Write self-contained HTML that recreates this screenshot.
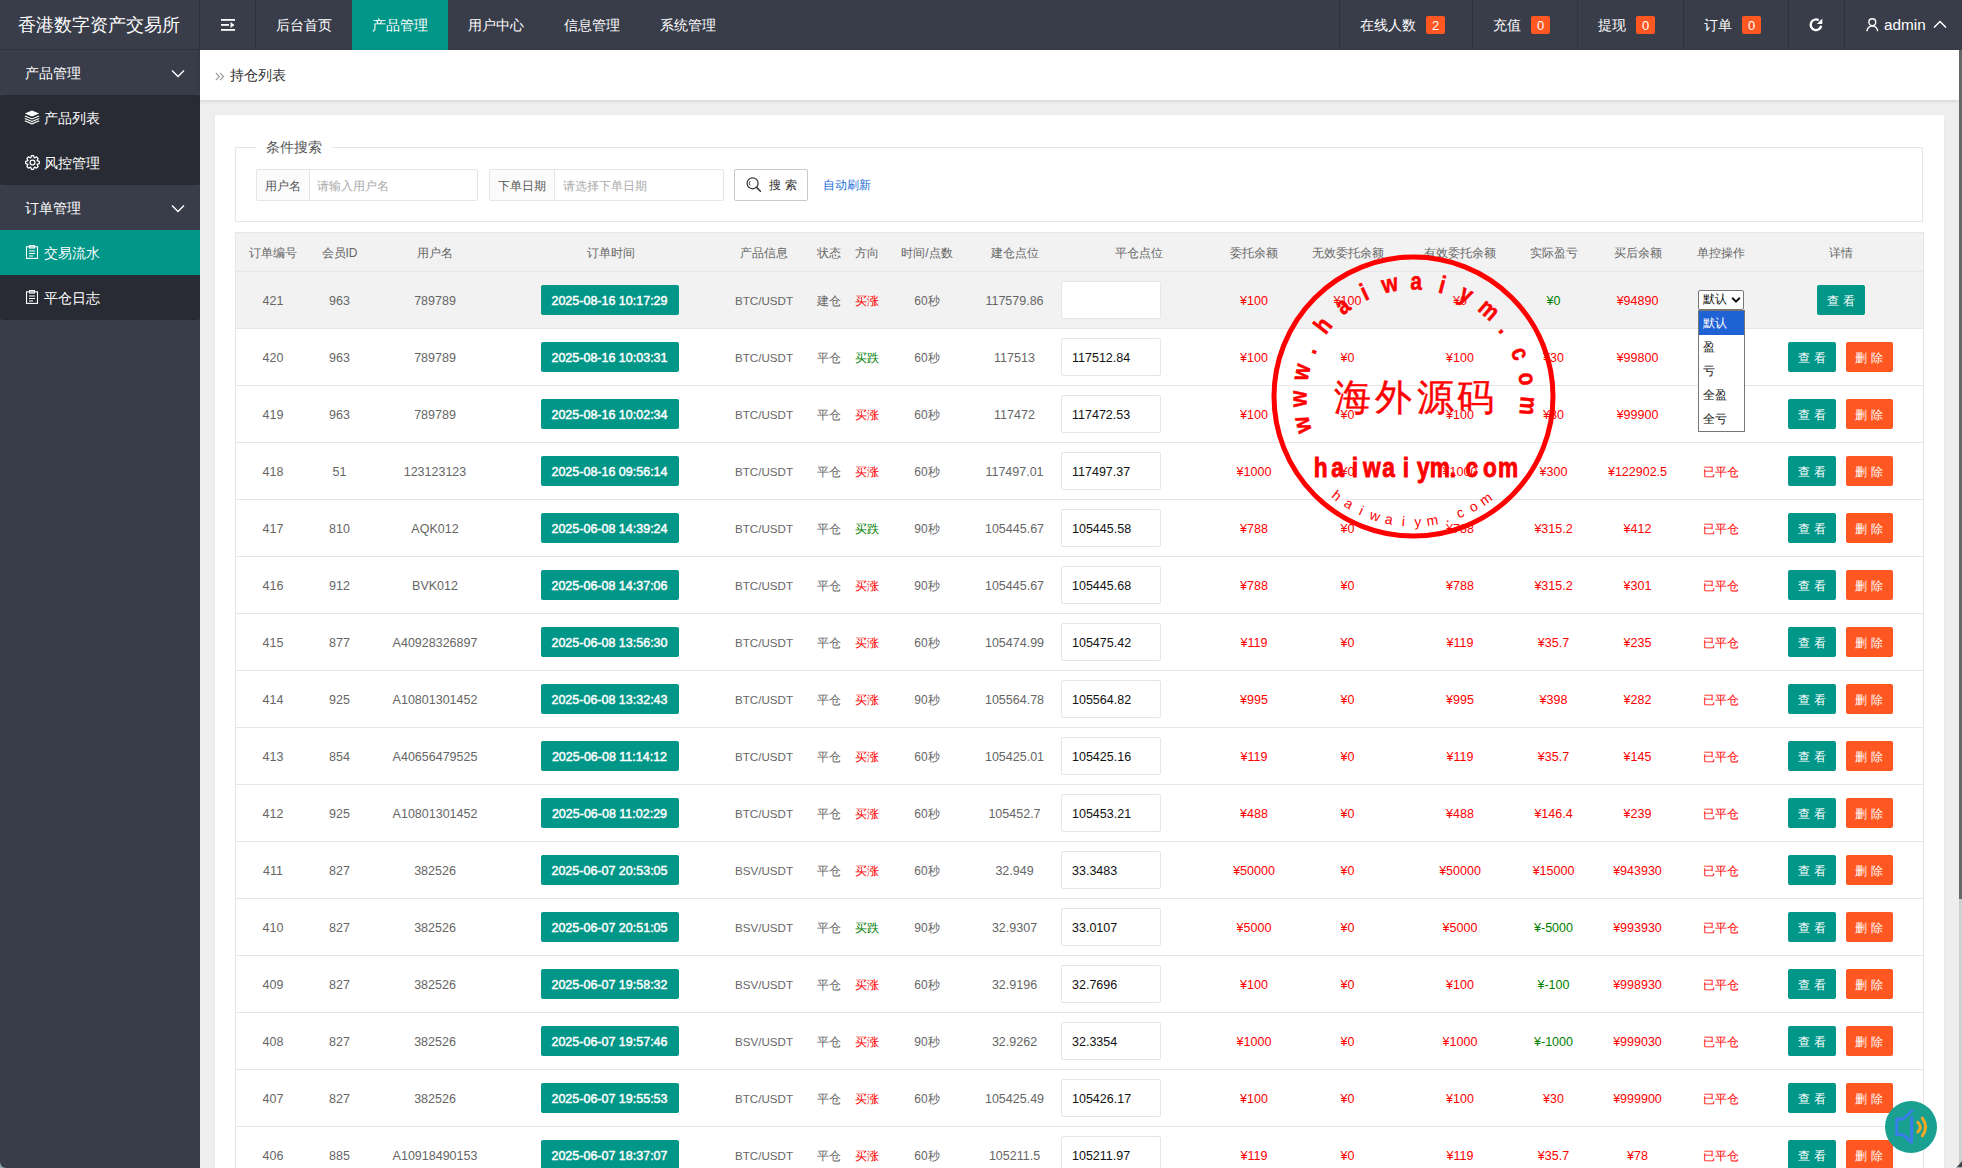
<!DOCTYPE html>
<html><head><meta charset="utf-8">
<style>
*{box-sizing:border-box;margin:0;padding:0}
html,body{width:1962px;height:1168px;overflow:hidden;background:#eee;font-family:"Liberation Sans",sans-serif;}
.hdr{position:absolute;left:0;top:0;width:1962px;height:50px;background:#393D49;color:#fff}
.logo{position:absolute;left:0;top:0;width:200px;height:50px;border-right:1px solid #2f323c;border-bottom:1px solid #2f323c;font-size:18px;line-height:50px;padding-left:18px;letter-spacing:0px;white-space:nowrap}
.hamb{position:absolute;left:200px;top:0;width:56px;height:50px;border-right:1px solid #30333d}
.nav{position:absolute;top:0;height:50px;line-height:50px;font-size:14px;text-align:center;width:96px}
.nav.act{background:#009688}
.rn{position:absolute;top:0;height:50px;line-height:50px;font-size:14px;border-left:1px solid #30333d;padding-left:20px;white-space:nowrap}
.badge{display:inline-block;position:absolute;top:16px;width:19px;height:18px;line-height:19px;background:#FF5722;border-radius:2px;font-size:13px;text-align:center}
.side{position:absolute;left:0;top:50px;width:200px;height:1118px;background:#393D49;color:#fff;font-size:14px;border-bottom-left-radius:6px}
.si{position:absolute;left:0;width:200px;height:45px;line-height:45px;padding-top:1px;padding-left:25px;white-space:nowrap}
.sub{position:absolute;left:0;width:200px;background:#282B33;border-radius:3px}
.si.act{background:#009688}
.si svg{position:absolute;left:25px;top:15px}
.si .tx{position:absolute;left:44px}
.chev{position:absolute;left:171px;top:19px}
.main{position:absolute;left:200px;top:50px;width:1759px;height:1118px;background:#eee}
.bc{position:absolute;left:0;top:0;width:1759px;height:50px;background:#fff;box-shadow:0 1px 4px rgba(0,0,0,.12);font-size:14px;color:#333;line-height:50px}
.card{position:absolute;left:15px;top:65px;width:1729px;height:1100px;background:#fff;box-shadow:0 1px 2px 0 rgba(0,0,0,.06)}
.fs{position:absolute;left:20px;top:32px;width:1688px;height:75px;border:1px solid #e6e6e6}
.legend{position:absolute;left:20px;top:-10px;background:#fff;padding:0 10px;font-size:14px;line-height:18px;color:#555}
.ig{position:absolute;top:22px;height:32px;border:1px solid #e6e6e6;border-radius:2px;background:#fff;font-size:12px;line-height:32px;white-space:nowrap}
.ig .lb{position:absolute;left:0;top:0;height:30px;background:#FBFBFB;border-right:1px solid #e6e6e6;color:#555;text-align:center}
.ig .ph{position:absolute;top:0;color:#aaa}
.sbtn{position:absolute;left:519px;top:22px;width:74px;height:32px;border:1px solid #C9C9C9;border-radius:2px;background:#fff;font-size:12px;line-height:30px;color:#333}
.auto{position:absolute;left:608px;top:30px;font-size:12px;line-height:16px;color:#1E6FD9}
.tbl{position:absolute;left:20px;top:117px;width:1688px;height:1000px}
.tbo{position:absolute;left:0;top:0;width:1689px;height:1000px;border-left:1px solid #e6e6e6;border-right:1px solid #e6e6e6;border-top:1px solid #e6e6e6;z-index:2}
.tr{position:absolute;left:0;width:1689px;border-bottom:1px solid #e6e6e6;background:#fff}
.th,.hl{background:#f2f2f2}
.c{position:absolute;top:0;height:100%;display:flex;align-items:center;justify-content:center;font-size:12px;color:#666;white-space:nowrap;padding-top:2px}
.c.n{font-size:12.5px;padding-top:1px}
.c.p{font-size:11.6px}
.c.d2{padding-right:1px}
.c.b{padding-top:0}
.th .c{padding-top:4px}
.red{color:#FF0000}.green{color:#008000}
.tbtn{position:relative;left:-1px;display:inline-block;width:138px;height:30px;line-height:32px;background:#009688;color:#fff;font-weight:normal;-webkit-text-stroke:0.45px #fff;border-radius:2px;text-align:center}
.inp{position:absolute;left:826px;width:100px;height:38px;border:1px solid #e6e6e6;border-radius:2px;background:#fff;font-size:12.5px;line-height:36px;padding-left:10px;padding-top:1px;color:#111}
.bt{display:inline-block;width:48px;height:30px;line-height:32px;color:#fff;font-size:12px;text-align:center;border-radius:2px;letter-spacing:4px;text-indent:3px}
.bt.g{background:#009688}.bt.o{background:#FF5722;margin-left:10px;width:47px}
.sel{display:inline-block;position:relative;width:46px;height:20px;border:1px solid #767676;border-radius:2px;background:#fff;color:#111;font-size:12px;line-height:17px;padding-left:4px;text-align:left}
.sel svg{position:absolute;left:32px;top:5px}
.dd{position:absolute;left:1698px;top:310px;width:47px;height:122px;border:1px solid #767676;background:#fff;font-size:12px;color:#111}
.dd div{height:24px;line-height:24px;padding-left:4px}
.dd .on{background:#1F62D4;color:#fff}
.sb{position:absolute;left:1959px;top:50px;width:3px;height:1118px;background:#cfcfcf}
.sbt{position:absolute;left:1959px;top:50px;width:3px;height:849px;background:#666}
.fab{position:absolute;left:1885px;top:1101px;width:52px;height:52px;z-index:6}
</style></head><body>
<div class="hdr">
  <div class="logo">香港数字资产交易所</div>
  <div class="hamb"><svg width="14" height="12" style="position:absolute;left:21px;top:19px" viewBox="0 0 14 12"><rect x="0" y="0" width="14" height="1.8" fill="#fff"/><rect x="0" y="5" width="8" height="1.8" fill="#fff"/><rect x="0" y="10" width="14" height="1.8" fill="#fff"/><path d="M9.5 3 L13.5 6 L9.5 9 Z" fill="#fff"/></svg></div>
  <div class="nav" style="left:256px">后台首页</div>
  <div class="nav act" style="left:352px">产品管理</div>
  <div class="nav" style="left:448px">用户中心</div>
  <div class="nav" style="left:544px">信息管理</div>
  <div class="nav" style="left:640px">系统管理</div>
  <div class="rn" style="left:1339px;width:133px">在线人数<span class="badge" style="left:86px">2</span></div>
  <div class="rn" style="left:1472px;width:105px">充值<span class="badge" style="left:58px">0</span></div>
  <div class="rn" style="left:1577px;width:106px">提现<span class="badge" style="left:58px">0</span></div>
  <div class="rn" style="left:1683px;width:105px">订单<span class="badge" style="left:58px">0</span></div>
  <div class="rn" style="left:1788px;width:57px;padding:0">
    <svg width="16" height="16" viewBox="0 0 16 16" style="position:absolute;left:19px;top:17px"><path d="M10.65 3.21 A5.3 5.3 0 1 0 13.2 8.7" stroke="#fff" stroke-width="2.3" fill="none"/><path d="M8.8 7.1 L14.3 1.6 L14.3 7.1 Z" fill="#fff"/></svg>
  </div>
  <div class="rn" style="left:1844px;width:118px;padding:0">
    <svg width="14" height="16" viewBox="0 0 14 16" style="position:absolute;left:21px;top:17px"><circle cx="6.3" cy="5.2" r="3.4" stroke="#fff" stroke-width="1.4" fill="none"/><path d="M1 14.3 A5.3 5.3 0 0 1 11.6 14.3" stroke="#fff" stroke-width="1.4" fill="none"/></svg>
    <span style="position:absolute;left:39px;font-size:15.3px">admin</span>
    <svg width="14" height="9" viewBox="0 0 14 9" style="position:absolute;left:88px;top:20px"><path d="M1 7.5 L7 1.5 L13 7.5" stroke="#fff" stroke-width="1.5" fill="none"/></svg>
  </div>
</div>
<div class="corner" style="position:absolute;left:0;top:1156px;width:12px;height:12px;background:#93a6b8"></div>
<div class="side">
  <div class="si" style="top:0">产品管理<svg class="chev" width="14" height="9" viewBox="0 0 14 9" style="position:absolute;left:171px;top:19px"><path d="M1 1.5 L7 7.5 L13 1.5" stroke="#fff" stroke-width="1.4" fill="none"/></svg></div>
  <div class="sub" style="top:45px;height:90px"></div>
  <div class="si" style="top:45px"><svg style="left:24px;top:15px" width="16" height="15" viewBox="0 0 16 15"><path d="M8 0.6 L15.2 3.6 L8 6.6 L0.8 3.6 Z" fill="#fff"/><path d="M0.8 6 L8 9 L15.2 6 M0.8 8.4 L8 11.4 L15.2 8.4 M0.8 10.8 L8 13.8 L15.2 10.8" stroke="#fff" stroke-width="1.1" fill="none"/></svg><span class="tx">产品列表</span></div>
  <div class="si" style="top:90px"><svg style="left:25px;top:15px" width="15" height="15" viewBox="0 0 15 15"><g fill="none" stroke="#fff" stroke-width="1.25" stroke-linejoin="round"><path d="M6.42 0.68 L8.58 0.68 L9.38 2.97 L11.56 1.92 L13.08 3.44 L12.03 5.62 L14.32 6.42 L14.32 8.58 L12.03 9.38 L13.08 11.56 L11.56 13.08 L9.38 12.03 L8.58 14.32 L6.42 14.32 L5.62 12.03 L3.44 13.08 L1.92 11.56 L2.97 9.38 L0.68 8.58 L0.68 6.42 L2.97 5.62 L1.92 3.44 L3.44 1.92 L5.62 2.97 Z"/><circle cx="7.5" cy="7.5" r="2.4"/></g></svg><span class="tx">风控管理</span></div>
  <div class="si" style="top:135px">订单管理<svg width="14" height="9" viewBox="0 0 14 9" style="position:absolute;left:171px;top:19px"><path d="M1 1.5 L7 7.5 L13 1.5" stroke="#fff" stroke-width="1.4" fill="none"/></svg></div>
  <div class="sub" style="top:180px;height:90px"></div>
  <div class="si act" style="top:180px"><svg width="14" height="14" viewBox="0 0 14 14"><g fill="none" stroke="#fff" stroke-width="1.1"><rect x="1.5" y="1.8" width="11" height="11.6"/><rect x="4.5" y="0.6" width="5" height="2.4"/><path d="M4 6 H10 M4 8.5 H10 M4 11 H8"/></g></svg><span class="tx">交易流水</span></div>
  <div class="si" style="top:225px"><svg width="14" height="14" viewBox="0 0 14 14"><g fill="none" stroke="#fff" stroke-width="1.1"><rect x="1.5" y="1.8" width="11" height="11.6"/><rect x="4.5" y="0.6" width="5" height="2.4"/><path d="M4 6 H10 M4 8.5 H10 M4 11 H8"/></g></svg><span class="tx">平仓日志</span></div>
</div>
<div class="main">
  <div class="bc"><svg width="10" height="9" viewBox="0 0 10 9" style="position:absolute;left:15px;top:22px"><path d="M0.8 0.8 L4.3 4.5 L0.8 8.2 M5 0.8 L8.5 4.5 L5 8.2" stroke="#999" stroke-width="1.1" fill="none"/></svg><span style="position:absolute;left:30px">持仓列表</span></div>
  <div class="card">
    <div class="fs">
      <div class="legend">条件搜索</div>
      <div class="ig" style="left:20px;top:21px;width:222px"><span class="lb" style="width:53px">用户名</span><span class="ph" style="left:60px">请输入用户名</span></div>
      <div class="ig" style="left:253px;top:21px;width:235px"><span class="lb" style="width:65px">下单日期</span><span class="ph" style="left:73px">请选择下单日期</span></div>
    </div>
    <div class="sbtn" style="left:519px;top:54px"><svg width="18" height="18" viewBox="0 0 18 18" style="position:absolute;left:10px;top:6px"><circle cx="7.6" cy="7.3" r="5.5" stroke="#333" stroke-width="1.2" fill="none"/><path d="M11.6 11.4 L15.4 15.2" stroke="#333" stroke-width="1.5" stroke-linecap="round"/><path d="M5.2 5.2 A3 3 0 0 0 5.2 9.4" stroke="#333" stroke-width="0.9" fill="none"/></svg><span style="position:absolute;left:34px;letter-spacing:4px">搜索</span></div>
    <div class="auto" style="top:62px">自动刷新</div>
    <div class="tbl">
<div class="tr th" style="top:0;height:40px"><div class="c " style="left:0px;width:76px">订单编号</div><div class="c " style="left:76px;width:57px">会员ID</div><div class="c " style="left:133px;width:134px">用户名</div><div class="c " style="left:267px;width:217px">订单时间</div><div class="c " style="left:484px;width:90px">产品信息</div><div class="c " style="left:574px;width:40px">状态</div><div class="c " style="left:614px;width:35px">方向</div><div class="c " style="left:649px;width:86px">时间/点数</div><div class="c " style="left:735px;width:89px">建仓点位</div><div class="c " style="left:824px;width:159px">平仓点位</div><div class="c " style="left:983px;width:72px">委托余额</div><div class="c " style="left:1055px;width:115px">无效委托余额</div><div class="c " style="left:1170px;width:110px">有效委托余额</div><div class="c " style="left:1280px;width:77px">实际盈亏</div><div class="c " style="left:1357px;width:91px">买后余额</div><div class="c " style="left:1448px;width:76px">单控操作</div><div class="c " style="left:1524px;width:164px">详情</div></div>
<div class="tr hl" style="top:40px;height:57px"><div class="c n" style="left:0px;width:76px">421</div><div class="c n" style="left:76px;width:57px">963</div><div class="c n" style="left:133px;width:134px">789789</div><div class="c b n" style="left:267px;width:217px"><span class="tbtn">2025-08-16 10:17:29</span></div><div class="c p n" style="left:484px;width:90px">BTC/USDT</div><div class="c " style="left:574px;width:40px">建仓</div><div class="c red" style="left:614px;width:35px">买涨</div><div class="c " style="left:649px;width:86px">60秒</div><div class="c n" style="left:735px;width:89px">117579.86</div><div class="inp" style="top:9px"></div><div class="c red n" style="left:983px;width:72px">¥100</div><div class="c red n" style="left:1055px;width:115px">¥100</div><div class="c red n" style="left:1170px;width:110px">¥0</div><div class="c green n" style="left:1280px;width:77px">¥0</div><div class="c red n" style="left:1357px;width:91px">¥94890</div><div class="c b" style="left:1448px;width:76px"><span class="sel">默认<svg width="10" height="8" viewBox="0 0 10 8"><path d="M1.2 1.8 L5 5.6 L8.8 1.8" stroke="#111" stroke-width="2" fill="none"/></svg></span></div><div class="c b" style="left:1524px;width:164px"><span class="bt g">查看</span></div></div>
<div class="tr" style="top:97px;height:57px"><div class="c n" style="left:0px;width:76px">420</div><div class="c n" style="left:76px;width:57px">963</div><div class="c n" style="left:133px;width:134px">789789</div><div class="c b n" style="left:267px;width:217px"><span class="tbtn">2025-08-16 10:03:31</span></div><div class="c p n" style="left:484px;width:90px">BTC/USDT</div><div class="c " style="left:574px;width:40px">平仓</div><div class="c green" style="left:614px;width:35px">买跌</div><div class="c " style="left:649px;width:86px">60秒</div><div class="c n" style="left:735px;width:89px">117513</div><div class="inp" style="top:9px">117512.84</div><div class="c red n" style="left:983px;width:72px">¥100</div><div class="c red n" style="left:1055px;width:115px">¥0</div><div class="c red n" style="left:1170px;width:110px">¥100</div><div class="c red n" style="left:1280px;width:77px">¥30</div><div class="c red n" style="left:1357px;width:91px">¥99800</div><div class="c red" style="left:1448px;width:76px">已平仓</div><div class="c d2 b" style="left:1524px;width:164px"><span class="bt g">查看</span><span class="bt o">删除</span></div></div>
<div class="tr" style="top:154px;height:57px"><div class="c n" style="left:0px;width:76px">419</div><div class="c n" style="left:76px;width:57px">963</div><div class="c n" style="left:133px;width:134px">789789</div><div class="c b n" style="left:267px;width:217px"><span class="tbtn">2025-08-16 10:02:34</span></div><div class="c p n" style="left:484px;width:90px">BTC/USDT</div><div class="c " style="left:574px;width:40px">平仓</div><div class="c red" style="left:614px;width:35px">买涨</div><div class="c " style="left:649px;width:86px">60秒</div><div class="c n" style="left:735px;width:89px">117472</div><div class="inp" style="top:9px">117472.53</div><div class="c red n" style="left:983px;width:72px">¥100</div><div class="c red n" style="left:1055px;width:115px">¥0</div><div class="c red n" style="left:1170px;width:110px">¥100</div><div class="c red n" style="left:1280px;width:77px">¥30</div><div class="c red n" style="left:1357px;width:91px">¥99900</div><div class="c red" style="left:1448px;width:76px">已平仓</div><div class="c d2 b" style="left:1524px;width:164px"><span class="bt g">查看</span><span class="bt o">删除</span></div></div>
<div class="tr" style="top:211px;height:57px"><div class="c n" style="left:0px;width:76px">418</div><div class="c n" style="left:76px;width:57px">51</div><div class="c n" style="left:133px;width:134px">123123123</div><div class="c b n" style="left:267px;width:217px"><span class="tbtn">2025-08-16 09:56:14</span></div><div class="c p n" style="left:484px;width:90px">BTC/USDT</div><div class="c " style="left:574px;width:40px">平仓</div><div class="c red" style="left:614px;width:35px">买涨</div><div class="c " style="left:649px;width:86px">60秒</div><div class="c n" style="left:735px;width:89px">117497.01</div><div class="inp" style="top:9px">117497.37</div><div class="c red n" style="left:983px;width:72px">¥1000</div><div class="c red n" style="left:1055px;width:115px">¥0</div><div class="c red n" style="left:1170px;width:110px">¥1000</div><div class="c red n" style="left:1280px;width:77px">¥300</div><div class="c red n" style="left:1357px;width:91px">¥122902.5</div><div class="c red" style="left:1448px;width:76px">已平仓</div><div class="c d2 b" style="left:1524px;width:164px"><span class="bt g">查看</span><span class="bt o">删除</span></div></div>
<div class="tr" style="top:268px;height:57px"><div class="c n" style="left:0px;width:76px">417</div><div class="c n" style="left:76px;width:57px">810</div><div class="c n" style="left:133px;width:134px">AQK012</div><div class="c b n" style="left:267px;width:217px"><span class="tbtn">2025-06-08 14:39:24</span></div><div class="c p n" style="left:484px;width:90px">BTC/USDT</div><div class="c " style="left:574px;width:40px">平仓</div><div class="c green" style="left:614px;width:35px">买跌</div><div class="c " style="left:649px;width:86px">90秒</div><div class="c n" style="left:735px;width:89px">105445.67</div><div class="inp" style="top:9px">105445.58</div><div class="c red n" style="left:983px;width:72px">¥788</div><div class="c red n" style="left:1055px;width:115px">¥0</div><div class="c red n" style="left:1170px;width:110px">¥788</div><div class="c red n" style="left:1280px;width:77px">¥315.2</div><div class="c red n" style="left:1357px;width:91px">¥412</div><div class="c red" style="left:1448px;width:76px">已平仓</div><div class="c d2 b" style="left:1524px;width:164px"><span class="bt g">查看</span><span class="bt o">删除</span></div></div>
<div class="tr" style="top:325px;height:57px"><div class="c n" style="left:0px;width:76px">416</div><div class="c n" style="left:76px;width:57px">912</div><div class="c n" style="left:133px;width:134px">BVK012</div><div class="c b n" style="left:267px;width:217px"><span class="tbtn">2025-06-08 14:37:06</span></div><div class="c p n" style="left:484px;width:90px">BTC/USDT</div><div class="c " style="left:574px;width:40px">平仓</div><div class="c red" style="left:614px;width:35px">买涨</div><div class="c " style="left:649px;width:86px">90秒</div><div class="c n" style="left:735px;width:89px">105445.67</div><div class="inp" style="top:9px">105445.68</div><div class="c red n" style="left:983px;width:72px">¥788</div><div class="c red n" style="left:1055px;width:115px">¥0</div><div class="c red n" style="left:1170px;width:110px">¥788</div><div class="c red n" style="left:1280px;width:77px">¥315.2</div><div class="c red n" style="left:1357px;width:91px">¥301</div><div class="c red" style="left:1448px;width:76px">已平仓</div><div class="c d2 b" style="left:1524px;width:164px"><span class="bt g">查看</span><span class="bt o">删除</span></div></div>
<div class="tr" style="top:382px;height:57px"><div class="c n" style="left:0px;width:76px">415</div><div class="c n" style="left:76px;width:57px">877</div><div class="c n" style="left:133px;width:134px">A40928326897</div><div class="c b n" style="left:267px;width:217px"><span class="tbtn">2025-06-08 13:56:30</span></div><div class="c p n" style="left:484px;width:90px">BTC/USDT</div><div class="c " style="left:574px;width:40px">平仓</div><div class="c red" style="left:614px;width:35px">买涨</div><div class="c " style="left:649px;width:86px">60秒</div><div class="c n" style="left:735px;width:89px">105474.99</div><div class="inp" style="top:9px">105475.42</div><div class="c red n" style="left:983px;width:72px">¥119</div><div class="c red n" style="left:1055px;width:115px">¥0</div><div class="c red n" style="left:1170px;width:110px">¥119</div><div class="c red n" style="left:1280px;width:77px">¥35.7</div><div class="c red n" style="left:1357px;width:91px">¥235</div><div class="c red" style="left:1448px;width:76px">已平仓</div><div class="c d2 b" style="left:1524px;width:164px"><span class="bt g">查看</span><span class="bt o">删除</span></div></div>
<div class="tr" style="top:439px;height:57px"><div class="c n" style="left:0px;width:76px">414</div><div class="c n" style="left:76px;width:57px">925</div><div class="c n" style="left:133px;width:134px">A10801301452</div><div class="c b n" style="left:267px;width:217px"><span class="tbtn">2025-06-08 13:32:43</span></div><div class="c p n" style="left:484px;width:90px">BTC/USDT</div><div class="c " style="left:574px;width:40px">平仓</div><div class="c red" style="left:614px;width:35px">买涨</div><div class="c " style="left:649px;width:86px">90秒</div><div class="c n" style="left:735px;width:89px">105564.78</div><div class="inp" style="top:9px">105564.82</div><div class="c red n" style="left:983px;width:72px">¥995</div><div class="c red n" style="left:1055px;width:115px">¥0</div><div class="c red n" style="left:1170px;width:110px">¥995</div><div class="c red n" style="left:1280px;width:77px">¥398</div><div class="c red n" style="left:1357px;width:91px">¥282</div><div class="c red" style="left:1448px;width:76px">已平仓</div><div class="c d2 b" style="left:1524px;width:164px"><span class="bt g">查看</span><span class="bt o">删除</span></div></div>
<div class="tr" style="top:496px;height:57px"><div class="c n" style="left:0px;width:76px">413</div><div class="c n" style="left:76px;width:57px">854</div><div class="c n" style="left:133px;width:134px">A40656479525</div><div class="c b n" style="left:267px;width:217px"><span class="tbtn">2025-06-08 11:14:12</span></div><div class="c p n" style="left:484px;width:90px">BTC/USDT</div><div class="c " style="left:574px;width:40px">平仓</div><div class="c red" style="left:614px;width:35px">买涨</div><div class="c " style="left:649px;width:86px">60秒</div><div class="c n" style="left:735px;width:89px">105425.01</div><div class="inp" style="top:9px">105425.16</div><div class="c red n" style="left:983px;width:72px">¥119</div><div class="c red n" style="left:1055px;width:115px">¥0</div><div class="c red n" style="left:1170px;width:110px">¥119</div><div class="c red n" style="left:1280px;width:77px">¥35.7</div><div class="c red n" style="left:1357px;width:91px">¥145</div><div class="c red" style="left:1448px;width:76px">已平仓</div><div class="c d2 b" style="left:1524px;width:164px"><span class="bt g">查看</span><span class="bt o">删除</span></div></div>
<div class="tr" style="top:553px;height:57px"><div class="c n" style="left:0px;width:76px">412</div><div class="c n" style="left:76px;width:57px">925</div><div class="c n" style="left:133px;width:134px">A10801301452</div><div class="c b n" style="left:267px;width:217px"><span class="tbtn">2025-06-08 11:02:29</span></div><div class="c p n" style="left:484px;width:90px">BTC/USDT</div><div class="c " style="left:574px;width:40px">平仓</div><div class="c red" style="left:614px;width:35px">买涨</div><div class="c " style="left:649px;width:86px">60秒</div><div class="c n" style="left:735px;width:89px">105452.7</div><div class="inp" style="top:9px">105453.21</div><div class="c red n" style="left:983px;width:72px">¥488</div><div class="c red n" style="left:1055px;width:115px">¥0</div><div class="c red n" style="left:1170px;width:110px">¥488</div><div class="c red n" style="left:1280px;width:77px">¥146.4</div><div class="c red n" style="left:1357px;width:91px">¥239</div><div class="c red" style="left:1448px;width:76px">已平仓</div><div class="c d2 b" style="left:1524px;width:164px"><span class="bt g">查看</span><span class="bt o">删除</span></div></div>
<div class="tr" style="top:610px;height:57px"><div class="c n" style="left:0px;width:76px">411</div><div class="c n" style="left:76px;width:57px">827</div><div class="c n" style="left:133px;width:134px">382526</div><div class="c b n" style="left:267px;width:217px"><span class="tbtn">2025-06-07 20:53:05</span></div><div class="c p n" style="left:484px;width:90px">BSV/USDT</div><div class="c " style="left:574px;width:40px">平仓</div><div class="c red" style="left:614px;width:35px">买涨</div><div class="c " style="left:649px;width:86px">60秒</div><div class="c n" style="left:735px;width:89px">32.949</div><div class="inp" style="top:9px">33.3483</div><div class="c red n" style="left:983px;width:72px">¥50000</div><div class="c red n" style="left:1055px;width:115px">¥0</div><div class="c red n" style="left:1170px;width:110px">¥50000</div><div class="c red n" style="left:1280px;width:77px">¥15000</div><div class="c red n" style="left:1357px;width:91px">¥943930</div><div class="c red" style="left:1448px;width:76px">已平仓</div><div class="c d2 b" style="left:1524px;width:164px"><span class="bt g">查看</span><span class="bt o">删除</span></div></div>
<div class="tr" style="top:667px;height:57px"><div class="c n" style="left:0px;width:76px">410</div><div class="c n" style="left:76px;width:57px">827</div><div class="c n" style="left:133px;width:134px">382526</div><div class="c b n" style="left:267px;width:217px"><span class="tbtn">2025-06-07 20:51:05</span></div><div class="c p n" style="left:484px;width:90px">BSV/USDT</div><div class="c " style="left:574px;width:40px">平仓</div><div class="c green" style="left:614px;width:35px">买跌</div><div class="c " style="left:649px;width:86px">90秒</div><div class="c n" style="left:735px;width:89px">32.9307</div><div class="inp" style="top:9px">33.0107</div><div class="c red n" style="left:983px;width:72px">¥5000</div><div class="c red n" style="left:1055px;width:115px">¥0</div><div class="c red n" style="left:1170px;width:110px">¥5000</div><div class="c green n" style="left:1280px;width:77px">¥-5000</div><div class="c red n" style="left:1357px;width:91px">¥993930</div><div class="c red" style="left:1448px;width:76px">已平仓</div><div class="c d2 b" style="left:1524px;width:164px"><span class="bt g">查看</span><span class="bt o">删除</span></div></div>
<div class="tr" style="top:724px;height:57px"><div class="c n" style="left:0px;width:76px">409</div><div class="c n" style="left:76px;width:57px">827</div><div class="c n" style="left:133px;width:134px">382526</div><div class="c b n" style="left:267px;width:217px"><span class="tbtn">2025-06-07 19:58:32</span></div><div class="c p n" style="left:484px;width:90px">BSV/USDT</div><div class="c " style="left:574px;width:40px">平仓</div><div class="c red" style="left:614px;width:35px">买涨</div><div class="c " style="left:649px;width:86px">60秒</div><div class="c n" style="left:735px;width:89px">32.9196</div><div class="inp" style="top:9px">32.7696</div><div class="c red n" style="left:983px;width:72px">¥100</div><div class="c red n" style="left:1055px;width:115px">¥0</div><div class="c red n" style="left:1170px;width:110px">¥100</div><div class="c green n" style="left:1280px;width:77px">¥-100</div><div class="c red n" style="left:1357px;width:91px">¥998930</div><div class="c red" style="left:1448px;width:76px">已平仓</div><div class="c d2 b" style="left:1524px;width:164px"><span class="bt g">查看</span><span class="bt o">删除</span></div></div>
<div class="tr" style="top:781px;height:57px"><div class="c n" style="left:0px;width:76px">408</div><div class="c n" style="left:76px;width:57px">827</div><div class="c n" style="left:133px;width:134px">382526</div><div class="c b n" style="left:267px;width:217px"><span class="tbtn">2025-06-07 19:57:46</span></div><div class="c p n" style="left:484px;width:90px">BSV/USDT</div><div class="c " style="left:574px;width:40px">平仓</div><div class="c red" style="left:614px;width:35px">买涨</div><div class="c " style="left:649px;width:86px">90秒</div><div class="c n" style="left:735px;width:89px">32.9262</div><div class="inp" style="top:9px">32.3354</div><div class="c red n" style="left:983px;width:72px">¥1000</div><div class="c red n" style="left:1055px;width:115px">¥0</div><div class="c red n" style="left:1170px;width:110px">¥1000</div><div class="c green n" style="left:1280px;width:77px">¥-1000</div><div class="c red n" style="left:1357px;width:91px">¥999030</div><div class="c red" style="left:1448px;width:76px">已平仓</div><div class="c d2 b" style="left:1524px;width:164px"><span class="bt g">查看</span><span class="bt o">删除</span></div></div>
<div class="tr" style="top:838px;height:57px"><div class="c n" style="left:0px;width:76px">407</div><div class="c n" style="left:76px;width:57px">827</div><div class="c n" style="left:133px;width:134px">382526</div><div class="c b n" style="left:267px;width:217px"><span class="tbtn">2025-06-07 19:55:53</span></div><div class="c p n" style="left:484px;width:90px">BTC/USDT</div><div class="c " style="left:574px;width:40px">平仓</div><div class="c red" style="left:614px;width:35px">买涨</div><div class="c " style="left:649px;width:86px">60秒</div><div class="c n" style="left:735px;width:89px">105425.49</div><div class="inp" style="top:9px">105426.17</div><div class="c red n" style="left:983px;width:72px">¥100</div><div class="c red n" style="left:1055px;width:115px">¥0</div><div class="c red n" style="left:1170px;width:110px">¥100</div><div class="c red n" style="left:1280px;width:77px">¥30</div><div class="c red n" style="left:1357px;width:91px">¥999900</div><div class="c red" style="left:1448px;width:76px">已平仓</div><div class="c d2 b" style="left:1524px;width:164px"><span class="bt g">查看</span><span class="bt o">删除</span></div></div>
<div class="tr" style="top:895px;height:57px"><div class="c n" style="left:0px;width:76px">406</div><div class="c n" style="left:76px;width:57px">885</div><div class="c n" style="left:133px;width:134px">A10918490153</div><div class="c b n" style="left:267px;width:217px"><span class="tbtn">2025-06-07 18:37:07</span></div><div class="c p n" style="left:484px;width:90px">BTC/USDT</div><div class="c " style="left:574px;width:40px">平仓</div><div class="c red" style="left:614px;width:35px">买涨</div><div class="c " style="left:649px;width:86px">60秒</div><div class="c n" style="left:735px;width:89px">105211.5</div><div class="inp" style="top:9px">105211.97</div><div class="c red n" style="left:983px;width:72px">¥119</div><div class="c red n" style="left:1055px;width:115px">¥0</div><div class="c red n" style="left:1170px;width:110px">¥119</div><div class="c red n" style="left:1280px;width:77px">¥35.7</div><div class="c red n" style="left:1357px;width:91px">¥78</div><div class="c red" style="left:1448px;width:76px">已平仓</div><div class="c d2 b" style="left:1524px;width:164px"><span class="bt g">查看</span><span class="bt o">删除</span></div></div>
<div class="tbo"></div>
    </div>
  </div>
</div>
<div class="dd"><div class="on">默认</div><div>盈</div><div>亏</div><div>全盈</div><div>全亏</div></div>
<svg style="position:absolute;left:0;top:0;z-index:5" width="1962" height="1168" viewBox="0 0 1962 1168">
<circle cx="1413.5" cy="396.6" r="139.5" stroke="#FF0000" stroke-width="5" fill="none"/>
<g fill="#FF0000" font-family="Liberation Sans" font-weight="bold" font-size="26" text-anchor="middle" stroke="#FF0000" stroke-width="0.6">
<text transform="translate(1413.5,396.6) rotate(-104.24) translate(0,-107) scale(0.8,0.95)" x="0" y="0">w</text>
<text transform="translate(1413.5,396.6) rotate(-91.11) translate(0,-107) scale(0.8,0.95)" x="0" y="0">w</text>
<text transform="translate(1413.5,396.6) rotate(-77.70) translate(0,-107) scale(0.8,0.95)" x="0" y="0">w</text>
<text transform="translate(1413.5,396.6) rotate(-65.79) translate(0,-107) scale(0.8,0.95)" x="0" y="0">.</text>
<text transform="translate(1413.5,396.6) rotate(-51.81) translate(0,-107) scale(0.8,0.95)" x="0" y="0">h</text>
<text transform="translate(1413.5,396.6) rotate(-37.97) translate(0,-107) scale(0.8,0.95)" x="0" y="0">a</text>
<text transform="translate(1413.5,396.6) rotate(-25.20) translate(0,-107) scale(0.8,0.95)" x="0" y="0">i</text>
<text transform="translate(1413.5,396.6) rotate(-11.98) translate(0,-107) scale(0.8,0.95)" x="0" y="0">w</text>
<text transform="translate(1413.5,396.6) rotate(1.37) translate(0,-107) scale(0.8,0.95)" x="0" y="0">a</text>
<text transform="translate(1413.5,396.6) rotate(14.44) translate(0,-107) scale(0.8,0.95)" x="0" y="0">i</text>
<text transform="translate(1413.5,396.6) rotate(27.30) translate(0,-107) scale(0.8,0.95)" x="0" y="0">y</text>
<text transform="translate(1413.5,396.6) rotate(41.05) translate(0,-107) scale(0.8,0.95)" x="0" y="0">m</text>
<text transform="translate(1413.5,396.6) rotate(53.36) translate(0,-107) scale(0.8,0.95)" x="0" y="0">.</text>
<text transform="translate(1413.5,396.6) rotate(68.08) translate(0,-107) scale(0.8,0.95)" x="0" y="0">c</text>
<text transform="translate(1413.5,396.6) rotate(81.03) translate(0,-107) scale(0.8,0.95)" x="0" y="0">o</text>
<text transform="translate(1413.5,396.6) rotate(94.58) translate(0,-107) scale(0.8,0.95)" x="0" y="0">m</text>
</g>
<g fill="#FF0000" font-family="Liberation Sans" font-size="14" text-anchor="middle">
<text transform="translate(1333.82,499.32) rotate(37.80)" x="0" y="0">h</text>
<text transform="translate(1346.23,507.84) rotate(31.16)" x="0" y="0">a</text>
<text transform="translate(1359.53,514.87) rotate(24.53)" x="0" y="0">i</text>
<text transform="translate(1373.56,520.31) rotate(17.89)" x="0" y="0">w</text>
<text transform="translate(1388.13,524.10) rotate(11.25)" x="0" y="0">a</text>
<text transform="translate(1403.03,526.18) rotate(4.62)" x="0" y="0">i</text>
<text transform="translate(1418.08,526.52) rotate(-2.02)" x="0" y="0">y</text>
<text transform="translate(1433.06,525.12) rotate(-8.65)" x="0" y="0">m</text>
<text transform="translate(1447.78,522.00) rotate(-15.29)" x="0" y="0">.</text>
<text transform="translate(1462.05,517.20) rotate(-21.93)" x="0" y="0">c</text>
<text transform="translate(1475.66,510.78) rotate(-28.56)" x="0" y="0">o</text>
<text transform="translate(1488.44,502.83) rotate(-35.20)" x="0" y="0">m</text>
</g>
<g fill="#FF0000" font-family="Liberation Serif" font-size="37" text-anchor="middle" stroke="#FF0000" stroke-width="0.4">
<text x="1352.3" y="410">海</text>
<text x="1393.5" y="410">外</text>
<text x="1435.5" y="410">源</text>
<text x="1475.7" y="410">码</text>
</g>
<g fill="#FF0000" font-family="Liberation Sans" font-weight="bold" font-size="27" text-anchor="middle" stroke="#FF0000" stroke-width="0.9">
<text transform="translate(1320.7,476.5) scale(0.84,1)">h</text>
<text transform="translate(1337.5,476.5) scale(0.84,1)">a</text>
<text transform="translate(1354.9,476.5) scale(0.84,1)">i</text>
<text transform="translate(1371.7,476.5) scale(0.84,1)">w</text>
<text transform="translate(1388.5,476.5) scale(0.84,1)">a</text>
<text transform="translate(1406,476.5) scale(0.84,1)">i</text>
<text transform="translate(1423.3,476.5) scale(0.84,1)">y</text>
<text transform="translate(1439.9,476.5) scale(0.84,1)">m</text>
<text transform="translate(1453,476.5) scale(0.84,1)">.</text>
<text transform="translate(1471.8,476.5) scale(0.84,1)">c</text>
<text transform="translate(1490,476.5) scale(0.84,1)">o</text>
<text transform="translate(1508,476.5) scale(0.84,1)">m</text>
</g>
</svg>
<div class="fab"><svg width="52" height="52" viewBox="0 0 52 52"><circle cx="26" cy="26" r="26" fill="#19A091"/><path d="M27 10 L18 18 L11.7 18 L11.7 33.6 L18 33.6 L26.5 41.3 L26.7 16.5" stroke="#3A7CEB" stroke-width="2.9" fill="none" stroke-linejoin="round" stroke-linecap="round"/><path d="M32.8 21.3 Q37.8 26.2 32.8 31" stroke="#F5A623" stroke-width="3" fill="none" stroke-linecap="round"/><path d="M37.3 17.1 Q43.9 26 37.3 34.9" stroke="#F5A623" stroke-width="3" fill="none" stroke-linecap="round"/></svg></div>
<div class="sb"></div><div class="sbt"></div>
<svg class="rz" width="8" height="10" style="position:absolute;left:1954px;top:1158px;z-index:7" viewBox="0 0 8 10"><path d="M8 3 L8 9 L3 9 Z" fill="#444"/><rect x="2" y="9" width="6" height="1" fill="#9fb3c4"/></svg>
</body></html>
